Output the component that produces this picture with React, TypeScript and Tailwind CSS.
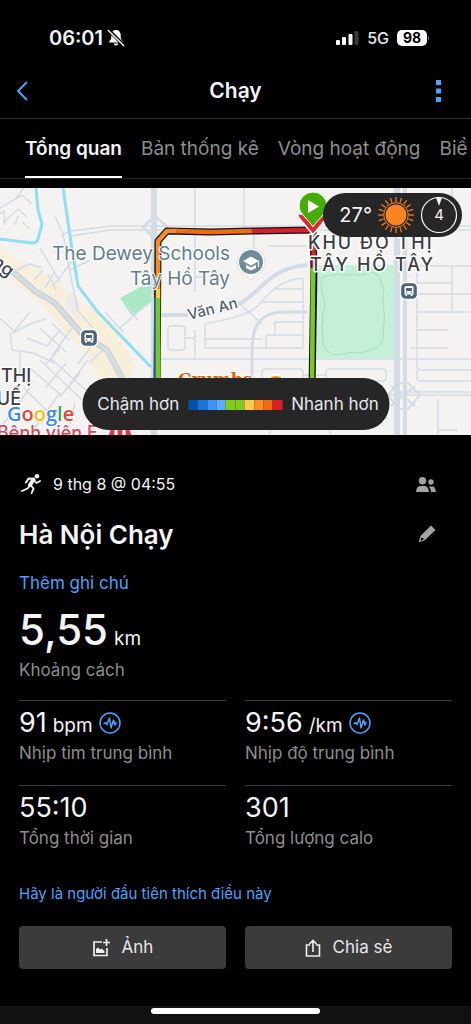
import { useState } from 'react';
import type { ReactNode } from 'react';

/** Tabs in the activity detail header. */
const TABS = ['Tổng quan', 'Bản thống kê', 'Vòng hoạt động', 'Biể'];

/** Pace legend swatches, slow to fast. */
const PACE_COLORS = [
    'bg-[#0550a5]',
    'bg-[#1976d6]',
    'bg-[#3f93f5]',
    'bg-[#5aacff]',
    'bg-[#82c91e]',
    'bg-[#82c91e]',
    'bg-[#ffc94a]',
    'bg-[#fb8c2a]',
    'bg-[#ee6c10]',
    'bg-[#d8202a]',
];

const STATS = [
    { value: '91', unit: 'bpm', label: 'Nhịp tim trung bình', zones: true },
    { value: '9:56', unit: '/km', label: 'Nhịp độ trung bình', zones: true },
    { value: '55:10', unit: '', label: 'Tổng thời gian', zones: false },
    { value: '301', unit: '', label: 'Tổng lượng calo', zones: false },
];

const SUN_RAYS = Array.from({ length: 20 }, (_, i) => i * 18);

function StatusBar() {
    return (
        <div className="flex h-[62px] items-end justify-between pr-[42px] pb-3 pl-[49px]">
            <div className="flex items-center gap-1">
                <span className="text-[20px] leading-6 font-semibold">06:01</span>
                <svg className="h-[18px] w-[18px]" viewBox="0 0 18 18">
                    <path d="M9 1C6 1 4.300 3.200 4.300 6v2.500C4.300 10.500 2 12 2 13.500h14c0-1.500-2.300-3-2.300-5V6C13.700 3.200 12 1 9 1zM6.800 14.500c.2 1.200 1 1.900 2.200 1.900s2-.7 2.200-1.900z" fill="#fff" />
                    <path d="M2 1.500l15 15" stroke="#000" strokeWidth="3.500" />
                    <path d="M1.300 1.600l15.400 15" stroke="#fff" strokeWidth="1.400" strokeLinecap="round" />
                </svg>
            </div>
            <div className="flex items-center gap-2">
                <svg className="h-4 w-[23px]" viewBox="0 0 23 16">
                    <rect x="0" y="10" width="4" height="5" rx="1" fill="#fff" />
                    <rect x="6" y="7" width="4" height="8" rx="1" fill="#fff" />
                    <rect x="12.500" y="4" width="4" height="11" rx="1" fill="#fff" />
                    <rect x="18.500" y="1" width="4" height="14" rx="1" fill="#3a3a3a" />
                </svg>
                <span className="text-base leading-6 font-medium text-gray-200">5G</span>
                <div className="flex items-center gap-px">
                    <span className="flex h-4 w-[30px] items-center justify-center rounded-[5px] bg-white text-sm font-bold text-black">98</span>
                    <span className="h-1 w-px rounded-r bg-neutral-500" />
                </div>
            </div>
        </div>
    );
}

function RouteMap() {
    return (
        <svg className="h-[247px] w-full" viewBox="0 0 471 247" preserveAspectRatio="xMidYMid slice" role="img" aria-label="Bản đồ">
            <rect width="471" height="247" fill="#f5f3f2" />

            {/* built-up areas and parks */}
            <path d="M0 57L22 76 50 88 78 112 101 126 122 153 135 178 126 200H104L88 168 62 140 44 118 0 84z" fill="#f8efdb" />
            <path d="M66 110l8-8 6 14-4 10-9-3z" fill="#eceaea" />
            <path d="M120 110l20-11 17-1-2 14-23 16z" fill="#a9e8c4" />
            <path d="M316 77h78v93h-78z" fill="#c3f0d6" />
            <path d="M322 90c8-5 20-3 34-3s12-6 22 0l6 14c-3 14 3 26-1 40 3 14-6 22-24 24-14-3-20 7-33-3-6-10-3-25-3-38 6-9-5-20-1-34z" fill="none" stroke="#a3dfbf" strokeWidth="1" />

            {/* main roads */}
            <g fill="none" stroke="#d3dbe4" strokeLinejoin="round">
                <path d="M154 0v247M397 0v247" strokeWidth="6" />
                <path d="M405 0v247" strokeWidth="4" />
                <path d="M401 0v247" stroke="#f5f3f2" strokeWidth="1" />
                <path d="M71 43L110 38H471M71 48l39-6H300M300 42h171" strokeWidth="1.500" />
                <path d="M143 39l12-11 12 11-12 12z" strokeWidth="2.500" />
                <path d="M160 127h28M238 116c10-4 16-11 24-18 12-12 24-19 45-21" strokeWidth="4" />
                <path d="M252 190v-28c0-24 8-38 32-38h23" strokeWidth="3" />
                <path d="M158 171H471M158 207h313M394 204h77" strokeWidth="1.500" />
                <path d="M388 207l10-12h10l12 12-12 14h-10zM391 198l24 20M415 198l-24 20" strokeWidth="2" />
            </g>

            {/* side streets */}
            <g fill="none" stroke="#d3dbe4" strokeWidth="1.500" strokeLinejoin="round">
                <path d="M195 0v104M244 0v42M195 89h12M195 142v29M254 43v22M268 58h39" />
                <rect x="168" y="138" width="17" height="24" rx="3" />
                <path d="M185 150h10M205 138c0-2 1-3 3-3 22-4 44-8 53-21 14-16 26-23 42-24v70h-98zM205 151h48M275 101h28M262 114h41M240 116l22 20M253 151h10" />
                <path d="M275 147v-13h28M266 160v-13h38" />
                <rect x="262" y="181" width="41" height="24" rx="3" />
                <rect x="326" y="181" width="60" height="12" rx="3" />
                <path d="M303 187h23M158 230h230M270 215v32M330 207v40" />
                <path d="M417 78v99c0 3 1 5 4 5h50M417 78h54M409 106h62M417 142h31M410 160h38M417 182v8c0 2 1 3 3 3h51M452 78v46M417 124h54M417 95h35" />
                <path d="M438 211v36M438 242h20M452 0v42" />
                <path d="M16 10l8-10M0 20l22-13 10 9M3 35l15-14 9 8M0 26l4-3 1 14M22 34l8 7M18 28l-3 9" />
                <path d="M55 28l8 18 10 54 5 23 15 17M62 48l7-5M73 72l-20 26M40 60l20 34M70 82l20-10" />
                <path d="M17 82l12-6 13 4M34 92l9-10M45 100l9-15M56 102l-8-16" />
                <path d="M96 123l50 52M105 124l18 20M120 140l32-28M138 132l-10-13" />
                <path d="M0 130l15 14 17-9 14-4M10 144l2 18 22 3M12 146l18-22M27 150l20 8 12-15M33 165l22 10M40 140l26 24M52 135l18 18M60 160l-14 16M20 163v22M72 140l-20 28M30 180l32 28M40 172l42 40M50 170l38 34M66 175l-20 24M80 185l-20 24M88 172l-18 24M24 200l30 30M60 205l-26 36M75 215l-8 32M0 240l30-40M90 160l-12 16M105 160l-16 15" />
            </g>
            <path d="M12 83l23 20 20 12 26 30 26 17 13 24 8 20" fill="none" stroke="#c3cdd6" strokeWidth="6" />
            <path d="M12 83l23 20 20 12 26 30 26 17 13 24 8 20" fill="none" stroke="#d5dde3" strokeWidth="4" />

            {/* canals */}
            <path d="M36 0l2 22 4 14-4 15q-1 4-6 4L0 51" fill="none" stroke="#90dff0" strokeWidth="3" />
            <path d="M63 0l7 48 8 50 19 25 54 56" fill="none" stroke="#90dff0" strokeWidth="3" />

            {/* recorded route */}
            <g fill="none" strokeLinejoin="round">
                <path d="M157 200l1-147 9-10 43 1 42-1 61-1 1 38-2 120" stroke="#111" strokeWidth="7" />
                <path d="M315 80l-2 120M155 110v90" stroke="#1976d6" strokeWidth="1.500" />
                <path d="M158 102V53l9-10h10" stroke="#f78a28" strokeWidth="4.500" />
                <path d="M176 43l34 1 42-1" stroke="#ee6c10" strokeWidth="4.500" />
                <path d="M252 43l61-1 1 38" stroke="#d8202a" strokeWidth="4.500" />
                <path d="M158 101v10" stroke="#ffc94a" strokeWidth="4.500" />
                <path d="M158 110v90M313 80l-1 120" stroke="#7dc71f" strokeWidth="4.500" />
            </g>

            {/* place labels */}
            <g fontFamily="Inter, sans-serif" stroke="#fff" strokeWidth="2" strokeLinejoin="round" paintOrder="stroke">
                <text x="230" y="72" textAnchor="end" fontSize="19" fill="#607d8b">The Dewey Schools</text>
                <text x="230" y="97" textAnchor="end" fontSize="19" fill="#607d8b">Tây Hồ Tây</text>
                <text x="189" y="132" fontSize="15" fill="#4f6076" fontWeight="500" transform="rotate(-14 189 132)">Văn An</text>
                <text x="-9" y="76" fontSize="18" fill="#3b4652" fontWeight="500" transform="rotate(38 -9 76)">ng</text>
                <text x="1" y="194" fontSize="18" fontWeight="500" fill="#3a3d42">THỊ</text>
                <text x="21" y="217" textAnchor="end" fontSize="18" fontWeight="500" fill="#3a3d42">UẾ</text>
                <text x="-3" y="251" fontSize="18" fontWeight="500" fill="#e0405a">Bệnh viện E</text>
                <text x="178" y="197" fontSize="17" fontWeight="700" fill="#d86408" fontFamily="DejaVu Serif, serif">Crumbs</text>
            </g>
            <circle cx="120" cy="248" r="12" fill="#e53950" stroke="#fff" strokeWidth="1.500" />
            <path d="M116 241v6M124 241v6" stroke="#fff" strokeWidth="3" />
            <circle cx="276" cy="198" r="11" fill="#fb7d18" stroke="#fff" strokeWidth="2" />

            <g fontFamily="Inter, sans-serif" fontSize="18" fontWeight="500" fill="#3a3d42" stroke="#fff" strokeWidth="3" strokeLinejoin="round" paintOrder="stroke" letterSpacing="2">
                <text x="308" y="61">KHU ĐÔ THỊ</text>
                <text x="310" y="83">TÂY HỒ TÂY</text>
            </g>

            {/* start and finish pins */}
            <path d="M299 27l14 17 14-17" fill="#e12732" stroke="#fff" strokeWidth="5" />
            <path d="M299 27l14 17 14-17" fill="#e12732" stroke="#e12732" strokeWidth="2" />
            <path d="M313 39C309 32 299 26 299 18a14 14 0 0128 0c0 8-10 14-14 21z" fill="#45ad05" stroke="#fff" strokeWidth="1" />
            <path d="M308 12v13l11-6.500z" fill="#fff" />

            {/* school pin */}
            <path d="M251 92c-2-4-14-7-14-18a14 14 0 0128 0c0 11-12 14-14 18z" fill="#fff" stroke="#c8cdd2" strokeWidth=".6" />
            <circle cx="251" cy="74" r="12" fill="#6f8b98" />
            <path d="M243 73l8-4.500 8 4.500-8 4.500zM246 76.500v3.500l5 2.500 5-2.500v-3.500l-5 3z" fill="#fff" />
            <path d="M258.500 73v6" stroke="#fff" strokeWidth="1.300" />

            {/* bus stops */}
            {[[89, 150], [409, 103]].map(([x, y]) => (
                <g key={x} transform={`translate(${x} ${y})`}>
                    <rect x="-8.500" y="-8.500" width="17" height="17" rx="5" fill="#4b657f" stroke="#fff" strokeWidth="1.300" />
                    <path d="M-4.500-3.500q0-1.500 1.500-1.500h6q1.500 0 1.500 1.500V3.500H3.500V5H2V3.500H-2V5h-1.500V3.500h-1z" fill="#fff" />
                    <path d="M-3-3h6v3h-6zM-3 1.300h1.300v1.200H-3zM1.700 1.300H3v1.200H1.700z" fill="#4b657f" />
                </g>
            ))}

            <text x="7" y="233" fontFamily="Open Sans, sans-serif" fontSize="20" fontWeight="600" stroke="#fff" strokeWidth="2" paintOrder="stroke">
                <tspan fill="#4285f4">G</tspan>
                <tspan fill="#ea4335">o</tspan>
                <tspan fill="#fbbc05">o</tspan>
                <tspan fill="#4285f4">g</tspan>
                <tspan fill="#34a853">l</tspan>
                <tspan fill="#ea4335">e</tspan>
            </text>
        </svg>
    );
}

function WeatherBadge() {
    return (
        <div className="absolute top-[5px] right-[9px] flex h-11 items-center gap-[6px] rounded-full bg-[#262626] pr-1 pl-4">
            <span className="text-[20px] text-gray-100">27°</span>
            <svg className="h-9 w-9" viewBox="-18 -18 36 36">
                <circle r="10.500" fill="#ff8321" />
                <circle r="12.300" fill="none" stroke="#ff8321" strokeWidth="1" />
                {SUN_RAYS.map((angle) => (
                    <path key={angle} d="M0-13v-5" stroke="#ff8321" strokeWidth="1.200" transform={`rotate(${angle})`} />
                ))}
            </svg>
            <svg className="h-[38px] w-[38px]" viewBox="-19 -19 38 38">
                <circle r="17.500" fill="none" stroke="#f5f5f5" strokeWidth="1.200" />
                <path d="M-3-17.500h6L0-9z" fill="#f5f5f5" />
                <text y="5" textAnchor="middle" fontFamily="Inter, sans-serif" fontSize="15" fill="#f5f5f5">4</text>
            </svg>
        </div>
    );
}

function PaceLegend() {
    return (
        <div className="absolute bottom-[5px] left-1/2 flex h-[52px] w-[307px] -translate-x-1/2 items-center justify-center gap-[9px] rounded-full bg-[#262626] pt-[2px] pl-[5px] text-[17px] whitespace-nowrap text-gray-200">
            <span>Chậm hơn</span>
            <div className="flex h-[10px] w-[94px] shrink-0">
                {PACE_COLORS.map((color, i) => (
                    <span key={i} className={`flex-1 ${color}`} />
                ))}
            </div>
            <span>Nhanh hơn</span>
        </div>
    );
}

function ZoneIcon() {
    return (
        <svg className="h-[22px] w-[22px]" viewBox="0 0 22 22" fill="none" stroke="#4ba3fb">
            <circle cx="11" cy="11" r="10" strokeWidth="1.500" />
            <path d="M4.500 12l2-1.500 1.500 2L10.500 6l1.500 10 2.500-8 1.500 5 1.300-3" strokeWidth="1.500" strokeLinejoin="round" />
        </svg>
    );
}

function ActionButton({ icon, children }: { icon: ReactNode; children: ReactNode }) {
    return (
        <button className="flex h-[43px] items-center justify-center gap-3 rounded bg-[#3b3b3b] text-[17px] text-gray-200">
            {icon}
            {children}
        </button>
    );
}

/**
 * Activity detail screen for a single run.
 */
function App() {
    const [activeTab, setActiveTab] = useState(TABS[0]);

    return (
        <div className="flex min-h-screen flex-col overflow-hidden bg-black font-[Inter,sans-serif] text-gray-100">
            <StatusBar />

            {/* Header */}
            <header className="flex h-[57px] items-center justify-between border-b border-[#333] px-4 pt-[2px]">
                <button aria-label="Quay lại" className="w-7">
                    <svg className="h-5 w-3" viewBox="0 0 12 20" fill="none" stroke="#4ba3fb" strokeWidth="2">
                        <path d="M11 1L2 10l9 9" />
                    </svg>
                </button>
                <h1 className="text-[21px] font-semibold">Chạy</h1>
                <button aria-label="Thêm" className="flex w-7 justify-center pr-[6px]">
                    <svg className="h-[22px] w-[5px]" viewBox="0 0 5 22" fill="#4ba3fb">
                        <path d="M0 0h5v5H0zM0 8.500h5v5H0zM0 17h5v5H0z" />
                    </svg>
                </button>
            </header>

            {/* Tabs */}
            <nav className="flex h-[60px] gap-[19px] overflow-hidden border-b border-[#262626] pl-[25px] text-[19px] whitespace-nowrap">
                {TABS.map((tab) => (
                    <button
                        key={tab}
                        onClick={() => setActiveTab(tab)}
                        className={`shrink-0 border-b-2 pt-1 ${tab === activeTab ? 'border-white font-semibold text-gray-100' : 'border-transparent text-[#8e8e8e]'}`}
                    >
                        {tab}
                    </button>
                ))}
            </nav>

            {/* Map */}
            <div className="relative mt-[9px]">
                <RouteMap />
                <WeatherBadge />
                <PaceLegend />
            </div>

            <main className="flex flex-1 flex-col px-[19px]">
                <div className="mt-[35px] flex h-7 items-center justify-between pr-4">
                    <div className="flex items-center gap-3">
                        <svg className="ml-[2px] h-5 w-5" viewBox="0 0 20 20" fill="none" stroke="#f3f3f3" strokeLinecap="round" strokeLinejoin="round">
                            <circle cx="16" cy="2.300" r="2.300" fill="#f3f3f3" stroke="none" />
                            <path d="M12.500 5.500L9 11" strokeWidth="4" />
                            <path d="M12 4.800L7.500 4.500 5 8.500M13 6l2.500 3 3.500-2M9 11.500L6.500 14.500 1 17M10 11.500l2.500 3-1.800 4.500" strokeWidth="1.900" />
                        </svg>
                        <span className="text-base">9 thg 8 @ 04:55</span>
                    </div>
                    <button aria-label="Quyền riêng tư">
                        <svg className="h-[15px] w-5" viewBox="0 0 20 15" fill="#a3a3a3">
                            <circle cx="6.500" cy="3.700" r="3.700" />
                            <circle cx="15" cy="5" r="2.700" />
                            <path d="M0 15c.3-4 2-6 4-6h5c2 0 3.700 2 4 6zM12.500 9.500h4c2 0 3 2 3.500 5.500h-5c-.2-2.500-1-4.500-2.500-5.500z" />
                        </svg>
                    </button>
                </div>

                <div className="mt-4 flex h-10 items-center justify-between pr-4">
                    <h2 className="text-[26px] font-semibold">Hà Nội Chạy</h2>
                    <button aria-label="Chỉnh sửa">
                        <svg className="h-[18px] w-[18px]" viewBox="0 0 18 18">
                            <path d="M13 .5L17.500 5 6.500 15.500 .7 17.300 2.500 11z" fill="#a3a3a3" />
                            <path d="M3.600 12.700l1.700.2.200 1.700-2.200.9-.7-.7z" fill="#000" />
                        </svg>
                    </button>
                </div>

                <a href="#note" className="mt-[17px] self-start text-[17px] leading-6 text-[#4ba3fb]">Thêm ghi chú</a>

                <div className="mt-4">
                    <p className="flex items-baseline gap-[6px] leading-[38px]">
                        <span className="text-[42px] font-medium">5,55</span>
                        <span className="text-[19px]">km</span>
                    </p>
                    <p className="text-[17px] leading-6 text-[#8e8e8e]">Khoảng cách</p>
                </div>

                {/* Stats */}
                <div className="mt-[18px] grid grid-cols-2 gap-x-[19px]">
                    {STATS.map((stat) => (
                        <div key={stat.label} className="h-[85px] border-t border-[#3b3b3b] pt-1">
                            <p className="flex h-9 items-baseline gap-[6px] leading-9">
                                <span className="text-[27px]">{stat.value}</span>
                                {stat.unit && <span className="text-[19px]">{stat.unit}</span>}
                                {stat.zones && <span className="self-center"><ZoneIcon /></span>}
                            </p>
                            <p className="text-[17px] leading-6 text-[#8e8e8e]">{stat.label}</p>
                        </div>
                    ))}
                </div>

                <a href="#like" className="mt-3 self-start text-[15px] leading-6 text-[#4ba3fb]">Hãy là người đầu tiên thích điều này</a>

                <div className="mt-5 grid grid-cols-2 gap-x-[19px]">
                    <ActionButton
                        icon={
                            <svg className="h-[18px] w-[18px]" viewBox="0 0 18 18" fill="none" stroke="#f0f0f0" strokeWidth="1.700">
                                <path d="M10 3H2v13.500h13V9M14.500 0v7M11 3.500h7" />
                                <path d="M4 14V10l2-1.500 2 2 1.500-1 3 2.500v2z" fill="#f0f0f0" stroke="none" />
                            </svg>
                        }
                    >
                        Ảnh
                    </ActionButton>
                    <ActionButton
                        icon={
                            <svg className="h-[18px] w-4" viewBox="0 0 16 18" fill="none" stroke="#f0f0f0" strokeWidth="1.600">
                                <path d="M5 6H1.500v11h13V6H11M8 13V1.500M4.500 5L8 1.500 11.500 5" />
                            </svg>
                        }
                    >
                        Chia sẻ
                    </ActionButton>
                </div>
            </main>

            {/* Home indicator */}
            <div className="flex h-[18px] justify-center bg-[#111] pt-[2px]">
                <div className="h-[6px] w-[169px] rounded-full bg-white" />
            </div>
        </div>
    );
}

export default App;
